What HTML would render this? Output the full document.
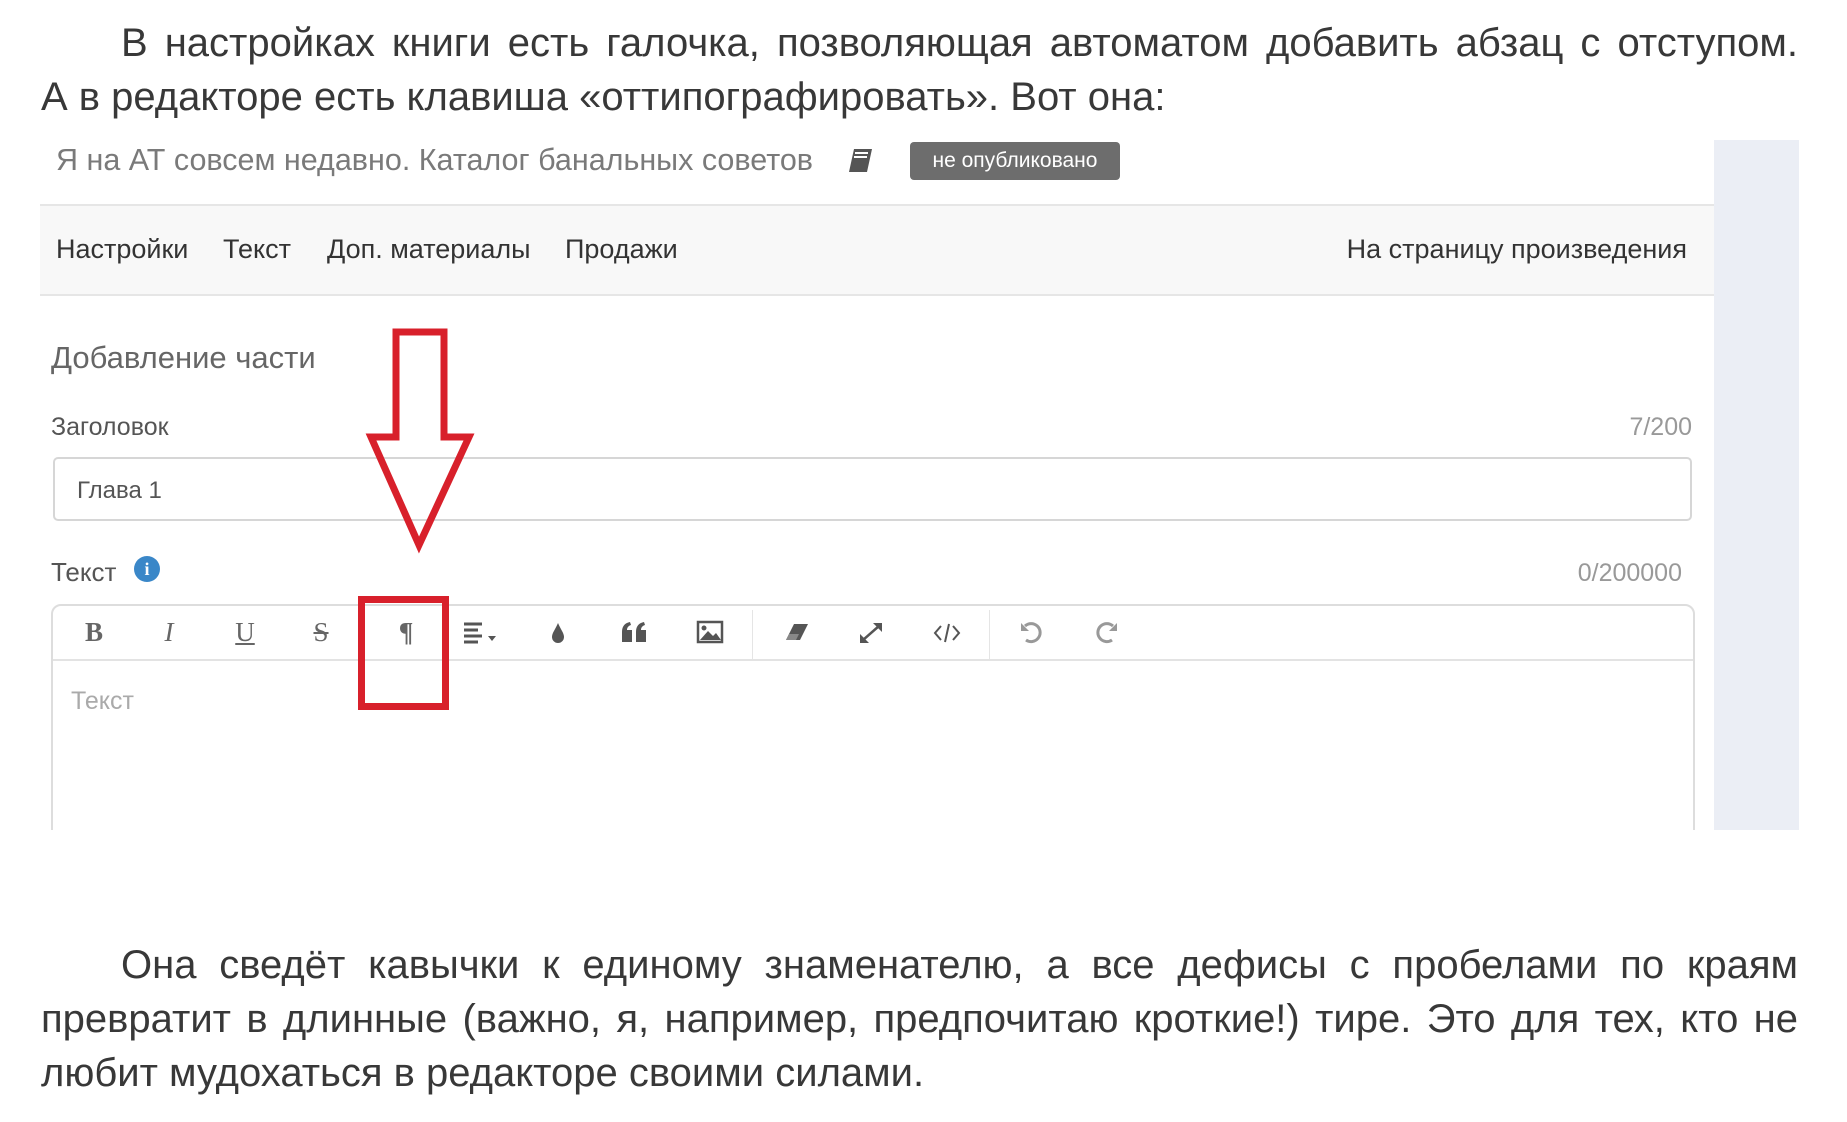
<!DOCTYPE html>
<html><head><meta charset="utf-8"><style>
*{margin:0;padding:0;box-sizing:border-box}
body{width:1847px;height:1122px;background:#fff;position:relative;overflow:hidden;font-family:"Liberation Sans","Noto Sans CJK SC",sans-serif;color:#3a3a3a}
.p{position:absolute;left:41px;width:1757px;font-size:40px;line-height:54px;color:#383838;letter-spacing:0}
.p .l{text-align:justify;text-align-last:justify;white-space:nowrap}
.p .l.i{padding-left:80px}
.p .e{text-align:left;white-space:nowrap}
.a{position:absolute;white-space:nowrap}
.ic{position:absolute;top:618px;font-size:24px;color:#666;font-family:"Liberation Serif",serif;width:40px;text-align:center;line-height:28px}
</style></head><body>
<div class="p" style="top:16px"><div class="l i" style="white-space:normal">В настройках книги есть галочка, позволяющая автоматом добавить абзац с отступом.</div><div class="e">А в редакторе есть клавиша «оттипографировать». Вот она:</div></div>

<div class="a" style="left:1714px;top:140px;width:85px;height:690px;background:#ebeef5"></div>
<div class="a" style="left:56px;top:142px;font-size:30.5px;color:#7a7a7a;line-height:36px">Я на АТ совсем недавно. Каталог банальных советов</div>
<svg class="a" style="left:846px;top:146px" width="30" height="30" viewBox="0 0 30 30"><path d="M8 3h18l-5 23H3z" fill="#555"/><path d="M9 7h13M8 11h13" stroke="#fff" stroke-width="2"/></svg>
<div class="a" style="left:910px;top:142px;width:210px;height:38px;background:#6d6d6d;border-radius:4px;color:#fff;font-size:21px;line-height:38px;text-align:center">не опубликовано</div>

<div class="a" style="left:40px;top:204px;width:1674px;height:92px;background:#f8f8f8;border-top:2px solid #e6e6e6;border-bottom:2px solid #e6e6e6"></div>
<div class="a" style="left:56px;top:233px;font-size:27px;color:#333;line-height:32px">Настройки</div>
<div class="a" style="left:223px;top:233px;font-size:27px;color:#333;line-height:32px">Текст</div>
<div class="a" style="left:327px;top:233px;font-size:27px;color:#333;line-height:32px">Доп. материалы</div>
<div class="a" style="left:565px;top:233px;font-size:27px;color:#333;line-height:32px">Продажи</div>
<div class="a" style="right:160px;top:233px;font-size:27px;color:#333;line-height:32px">На страницу произведения</div>

<div class="a" style="left:51px;top:340px;font-size:31px;color:#666;line-height:36px">Добавление части</div>
<div class="a" style="left:51px;top:413px;font-size:25px;color:#555;line-height:28px">Заголовок</div>
<div class="a" style="right:155px;top:413px;font-size:25px;color:#999;line-height:28px">7/200</div>
<div class="a" style="left:53px;top:457px;width:1639px;height:64px;border:2px solid #d6d6d6;border-radius:5px"></div>
<div class="a" style="left:77px;top:477px;font-size:24px;color:#555;line-height:28px">Глава 1</div>

<div class="a" style="left:51px;top:557px;font-size:26px;color:#555;line-height:30px">Текст</div>
<div class="a" style="left:134px;top:556px;width:26px;height:26px;border-radius:50%;background:#3a87c8;color:#fff;font-size:18px;font-weight:bold;text-align:center;line-height:26px;font-family:'Liberation Serif',serif">i</div>
<div class="a" style="right:165px;top:559px;font-size:25px;color:#999;line-height:28px">0/200000</div>

<div class="a" style="left:51px;top:604px;width:1644px;height:240px;border:2px solid #ddd;border-radius:10px"></div>
<div class="a" style="left:53px;top:659px;width:1640px;height:2px;background:#e3e3e3"></div>
<div class="a" style="left:752px;top:610px;width:1px;height:49px;background:#e5e5e5"></div>
<div class="a" style="left:989px;top:610px;width:1px;height:49px;background:#e5e5e5"></div>
<div class="a" style="left:0;top:830px;width:1847px;height:40px;background:#fff"></div>

<div class="ic" style="left:74px;font-weight:bold;font-size:27px">B</div>
<div class="ic" style="left:149px;font-style:italic;font-size:27px">I</div>
<div class="ic" style="left:225px;text-decoration:underline;font-size:27px">U</div>
<div class="ic" style="left:301px;text-decoration:line-through;font-size:27px">S</div>
<div class="ic" style="left:386px;font-weight:bold;font-size:27px">¶</div>
<svg class="a" style="left:462px;top:620px" width="46" height="26" viewBox="0 0 46 26"><path d="M2 4h18M2 10h14M2 16h18M2 22h14" stroke="#555" stroke-width="3"/><path d="M26 16h8l-4 5z" fill="#555"/></svg>
<svg class="a" style="left:549px;top:620px" width="18" height="26" viewBox="0 0 18 26"><path d="M9 3C6 10 3 13 3 17a6 6 0 0 0 12 0c0-4-3-7-6-14z" fill="#555"/></svg>
<svg class="a" style="left:620px;top:620px" width="28" height="24" viewBox="0 0 28 24"><path d="M2 22V12C2 6 5 3 10 2l1 3c-3 1-4 3-4 5h5v12z M16 22V12c0-6 3-9 8-10l1 3c-3 1-4 3-4 5h5v12z" fill="#555"/></svg>
<svg class="a" style="left:696px;top:620px" width="28" height="24" viewBox="0 0 28 24"><rect x="2" y="2" width="24" height="20" fill="none" stroke="#555" stroke-width="2.5"/><path d="M4 20l8-9 5 5 3-3 5 7z" fill="#555"/><circle cx="8" cy="8" r="2.5" fill="#555"/></svg>
<svg class="a" style="left:782px;top:620px" width="30" height="24" viewBox="0 0 30 24"><path d="M12 4h14l-8 16H4z" fill="#555"/><path d="M4 20h10l3-6H7z" fill="#888"/></svg>
<svg class="a" style="left:857px;top:620px" width="28" height="26" viewBox="0 0 28 26"><path d="M6 20L22 6" stroke="#555" stroke-width="2.5"/><path d="M16 3h9v9z M3 14v9h9z" fill="#555"/></svg>
<svg class="a" style="left:932px;top:622px" width="30" height="22" viewBox="0 0 30 22"><path d="M9 4L3 11l6 7M21 4l6 7-6 7M17 2l-4 18" stroke="#555" stroke-width="2" fill="none"/></svg>
<svg class="a" style="left:1018px;top:620px" width="26" height="26" viewBox="0 0 26 26"><path d="M7 6A9 9 0 1 1 8 20" stroke="#999" stroke-width="3" fill="none"/><path d="M3 3v8h8z" fill="#999"/></svg>
<svg class="a" style="left:1094px;top:620px" width="26" height="26" viewBox="0 0 26 26"><path d="M19 6A9 9 0 1 0 18 20" stroke="#999" stroke-width="3" fill="none"/><path d="M23 3v8h-8z" fill="#999"/></svg>

<div class="a" style="left:71px;top:686px;font-size:25px;color:#aaa;line-height:30px">Текст</div>

<div class="a" style="left:358px;top:596px;width:91px;height:114px;border:7px solid #d8202b"></div>
<svg class="a" style="left:363px;top:325px" width="112" height="230" viewBox="0 0 112 230"><path d="M33 7h48v105h25L56 220 8 112h25z" fill="none" stroke="#d8202b" stroke-width="7" stroke-linejoin="miter"/></svg>

<div class="p" style="top:938px"><div class="l i" style="white-space:normal">Она сведёт кавычки к единому знаменателю, а все дефисы с пробелами по краям</div><div class="l" style="white-space:normal">превратит в длинные (важно, я, например, предпочитаю кроткие!) тире. Это для тех, кто не</div><div class="e">любит мудохаться в редакторе своими силами.</div></div>
</body></html>
